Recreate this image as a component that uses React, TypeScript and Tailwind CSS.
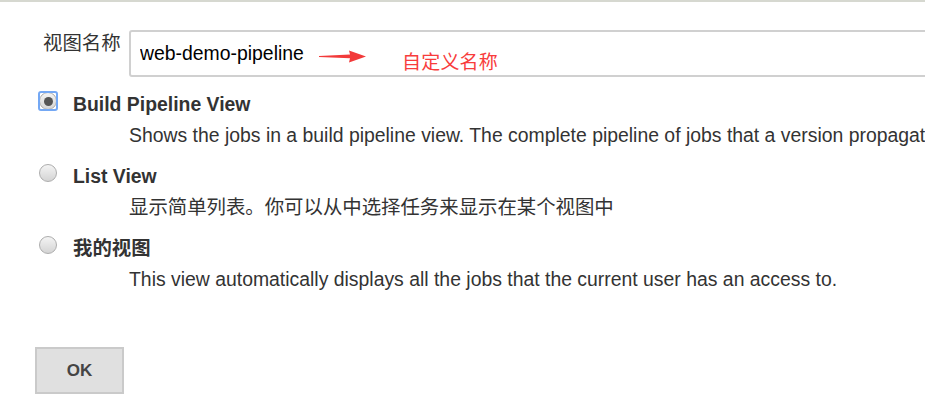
import React, { useState } from "react";

type Option = { id: string; title: string; desc: string };

const options: Option[] = [
  {
    id: "build",
    title: "Build Pipeline View",
    desc: "Shows the jobs in a build pipeline view. The complete pipeline of jobs that a version propagates through are shown as a row in the view.",
  },
  { id: "list", title: "List View", desc: "显示简单列表。你可以从中选择任务来显示在某个视图中" },
  {
    id: "my",
    title: "我的视图",
    desc: "This view automatically displays all the jobs that the current user has an access to.",
  },
];

function Radio({ checked, focused }: { checked: boolean; focused: boolean }) {
  return (
    <span className="relative mt-[3.5px] flex h-[18px] w-[18px] shrink-0 items-center justify-center rounded-full border border-[#adadad] bg-gradient-to-b from-[#f4f4f4] to-[#d4d4d4]">
      {focused && (
        <span className="pointer-events-none absolute -inset-[2px] rounded-[3px] border-2 border-[#74a8f4]" />
      )}
      {checked && <span className="h-[9px] w-[9px] rounded-full bg-[#555]" />}
    </span>
  );
}

export default function App() {
  const [name, setName] = useState("web-demo-pipeline");
  const [selected, setSelected] = useState("build");

  return (
    <div className="relative h-[420px] w-[925px] overflow-hidden bg-white font-['Liberation_Sans','Noto_Sans_CJK_SC',sans-serif] text-[#333]">
      <div className="h-[2px] bg-[#d6d8d0]" />

      {/* 视图名称 */}
      <div className="flex pt-[28px]">
        <label className="w-[129px] shrink-0 pl-[43px] text-[19.4px] leading-[26px]">视图名称</label>
        <div className="relative">
          <input
            value={name}
            onChange={(e) => setName(e.target.value)}
            className="h-[47px] w-[820px] rounded-[3px] border-2 border-[#d0d0d0] bg-white pl-[9px] text-[19.4px] text-black outline-none"
          />
          {/* annotation */}
          <svg
            className="pointer-events-none absolute left-[190px] top-[20px]"
            width="48"
            height="13"
            viewBox="0 0 48 13"
          >
            <path d="M0 6 L31 4.4 L30 0.5 L47 6.5 L30 12.5 L31 8.2 L0 7 Z" fill="#f23a3a" />
          </svg>
          <span className="pointer-events-none absolute left-[273px] top-[19px] text-[19px] leading-[24px] tracking-[0.2px] text-[#f83c3c] font-['Noto_Sans_CJK_SC',sans-serif]">
            自定义名称
          </span>
        </div>
      </div>

      {/* view types */}
      <div className="mt-[11.5px] pl-[39px]">
        {options.map((o, i) => (
          <div key={o.id} className="mb-[10px] cursor-pointer" onClick={() => setSelected(o.id)}>
            <div className="flex h-[31px] items-start gap-[16px]">
              <Radio checked={selected === o.id} focused={i === 0} />
              <span className="text-[19.4px] font-bold leading-[31px]">{o.title}</span>
            </div>
            <p className="whitespace-nowrap pl-[90px] text-[19.4px] leading-[31px]">{o.desc}</p>
          </div>
        ))}
      </div>

      <div className="pl-[35px] pt-[42.5px]">
        <button className="h-[47px] w-[89px] border-2 border-[#cacaca] bg-[#e0e0e0] text-[17px] font-bold text-[#444]">
          OK
        </button>
      </div>
    </div>
  );
}
